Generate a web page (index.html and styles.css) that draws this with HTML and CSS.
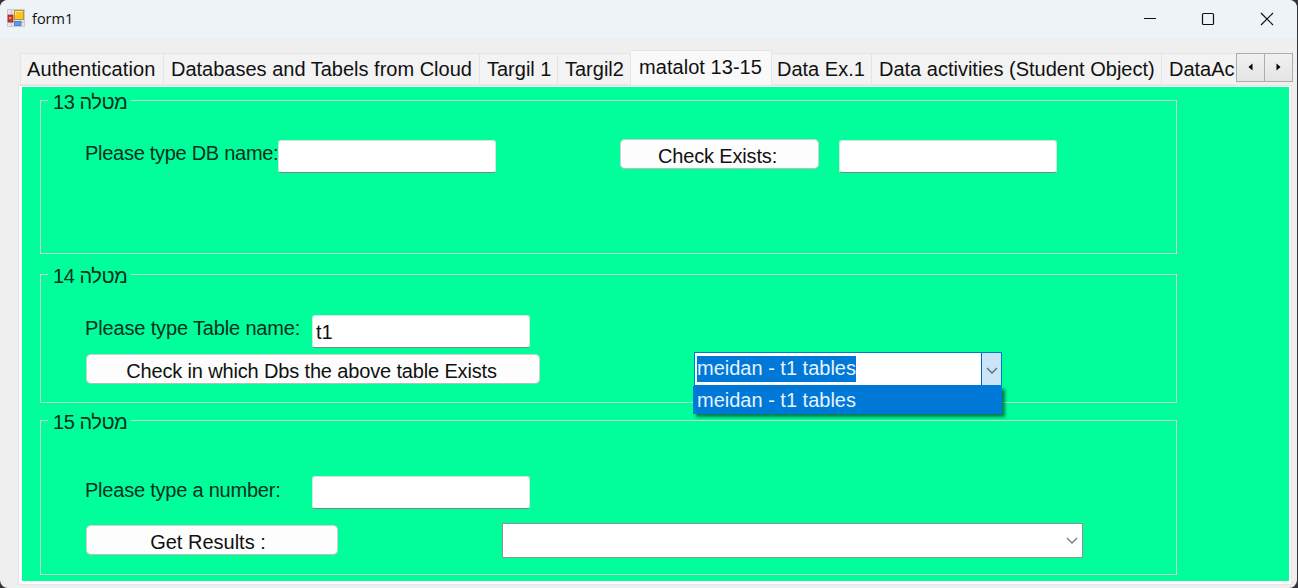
FILE: index.html
```html
<!DOCTYPE html>
<html lang="en">
<head>
<meta charset="utf-8">
<title>form1</title>
<link rel="stylesheet" href="styles.css">
</head>
<body>
<div class="window">
  <header class="titlebar">
    <svg class="app-icon" width="18" height="18" viewBox="0 0 18 18">
      <rect x="0.5" y="0.5" width="17" height="17" fill="#e4e6e8" stroke="#c9cccf"/>
      <path d="M4.5 1v16M1 13.5h16M12 13v4" stroke="#c4c7ca" fill="none"/>
      <rect x="1" y="6" width="5" height="7" fill="#c93a2b" stroke="#97261d" stroke-width=".7"/>
      <rect x="2.2" y="8" width="2" height="2" fill="#ef9a8c"/>
      <rect x="7.4" y="1.4" width="9" height="9.2" fill="#f7c32e" stroke="#bf8a13" stroke-width=".9"/>
      <path d="M8.5 6V2.500h7" stroke="#ffe78a" fill="none"/>
      <rect x="7.5" y="12.4" width="6.500" height="4.200" fill="#5a9cf0" stroke="#3c73c9" stroke-width=".8"/>
    </svg>
    <span class="title">form1</span>
    <svg class="controls" width="160" height="38" viewBox="0 0 160 38" fill="none" stroke="#111">
      <path d="M24 18.500h12" />
      <rect x="82.500" y="13.500" width="11" height="11" rx="1" stroke-width="1.200"/>
      <path d="M141 13l12 12M153 13l-12 12" stroke-width="1.200"/>
    </svg>
  </header>
  <nav class="tabs">
    <div class="tab-strip">
      <span class="tab t-auth">Authentication</span>
      <span class="tab t-db">Databases and Tabels from Cloud</span>
      <span class="tab t-one">Targil 1</span>
      <span class="tab t-two">Targil2</span>
      <span class="tab t-mat active">matalot 13-15</span>
      <span class="tab t-ex">Data Ex.1</span>
      <span class="tab t-act">Data activities (Student Object)</span>
      <span class="tab t-last">DataAc</span>
    </div>
    <div class="scroller">
      <span class="arrow"><svg width="5" height="8" viewBox="0 0 5 8"><path d="M4.500 0.500v7L0.500 4z"/></svg></span>
      <span class="arrow"><svg width="5" height="8" viewBox="0 0 5 8"><path d="M0.500 0.500v7L4.500 4z"/></svg></span>
    </div>
  </nav>
  <main class="page">
    <section class="group g13">
      <h2 class="legend">מטלה 13</h2>
      <div class="row">
        <label class="label l-db">Please type DB name:</label>
        <span class="box"></span>
        <span class="button b-check">Check Exists:</span>
        <span class="box"></span>
      </div>
    </section>
    <section class="group g14">
      <h2 class="legend">מטלה 14</h2>
      <div class="row">
        <label class="label l-table">Please type Table name:</label>
        <span class="box">t1</span>
      </div>
      <div class="row actions">
        <span class="button b-which">Check in which Dbs the above table Exists</span>
        <div class="combo open">
          <span class="value"><span class="selected">meidan - t1 tables</span></span>
          <span class="drop"><svg width="12" height="7" viewBox="0 0 12 7"><path d="M1 1l5 5 5-5" fill="none" stroke="#5c6670" stroke-width="1.300"/></svg></span>
          <div class="menu">meidan - t1 tables</div>
        </div>
      </div>
    </section>
    <section class="group g15">
      <h2 class="legend">מטלה 15</h2>
      <div class="row">
        <label class="label l-num">Please type a number:</label>
        <span class="box"></span>
      </div>
      <div class="row actions">
        <span class="button b-get">Get Results :</span>
        <div class="combo wide">
          <span class="value"></span>
          <span class="drop"><svg width="12" height="7" viewBox="0 0 12 7"><path d="M1 1l5 5 5-5" fill="none" stroke="#777" stroke-width="1.300"/></svg></span>
        </div>
      </div>
    </section>
  </main>
</div>
</body>
</html>
```
FILE: styles.css
```css
* { box-sizing: border-box; }
body {
  margin: 0;
  height: 588px;
  overflow: hidden;
  background: #34343a;
  font: 20px/24px "Liberation Sans", Arial, sans-serif;
  color: #111;
}
.window {
  width: 1297px;
  height: 588px;
  border-radius: 8px;
  overflow: hidden;
  background: #efefef;
  display: flex;
  flex-direction: column;
}
.titlebar {
  height: 38px;
  flex: none;
  display: flex;
  align-items: center;
  padding-left: 7px;
  background: #eef3f8;
}
.app-icon { margin-top: -2px; }
.title { margin-left: 7px; font: 14.500px/20px "Open Sans", "Noto Sans", sans-serif; color: #111; }
.controls { margin-left: auto; margin-right: 17px; }

.tabs { height: 47px; flex: none; display: flex; align-items: flex-end; padding-left: 20px; }
.tab-strip { width: 1216px; display: flex; align-items: flex-end; overflow: hidden; }
.tab {
  flex: none;
  height: 32px;
  padding: 3px 0 0 7px;
  background: #f3f3f3;
  border: 1px solid #e5e5e5;
  border-left-width: 0;
  white-space: nowrap;
}
.tab:first-child { border-left-width: 1px; padding-left: 6px; }
.tab.active { height: 35px; background: #f9f9f9; border-bottom: 0; padding: 4px 0 0 8px; }
.t-auth { width: 144px; letter-spacing: .13px; }
.t-db { width: 316px; }
.t-one { width: 78px; }
.t-two { width: 73px; }
.t-mat { width: 141px; letter-spacing: .05px; }
.t-ex { width: 100px; padding-left: 5px; }
.t-act { width: 290px; }
.t-last { width: 90px; }
.scroller { display: flex; align-self: flex-start; margin-top: 15px; }
.arrow {
  width: 29px;
  height: 29px;
  display: flex;
  align-items: center;
  justify-content: center;
  padding-bottom: 2px;
  background: linear-gradient(#f1f1f1, #e4e4e4);
  border: 1px solid #adadad;
}
.arrow + .arrow { margin-left: -1px; }

.page {
  margin: 0 5px 3px 18px;
  height: 500px;
  padding: 13px 0 0 18px;
  border: solid #fff;
  border-width: 2px 3px 4px 4px;
  background: #00fe9b;
  outline: 1px solid #e6e6e6;
  outline-offset: -1px;
}
.group { width: 1137px; border: 1px solid #c3dccf; padding-left: 44px; }
.g13 { height: 154px; }
.g14 { height: 129px; margin-top: 20px; }
.g15 { height: 155px; margin-top: 17px; }
.legend {
  width: 83px;
  height: 24px;
  margin: -11px 0 0 -37px;
  padding-left: 5px;
  background: #00fe9b;
  font: 20px/24px "Liberation Sans", "DejaVu Sans", sans-serif;
  letter-spacing: -.45px;
  white-space: nowrap;
  color: #06301f;
}
.row { display: flex; align-items: flex-start; }
.label { line-height: 24px; letter-spacing: -.15px; white-space: nowrap; color: #06301f; }
.box {
  width: 218px;
  height: 33px;
  padding: 4px 3px;
  background: #fff;
  border: 1px solid #d6e6de;
  border-bottom-color: #7f8581;
  border-radius: 3px;
}
.button {
  height: 30px;
  padding-top: 4px;
  background: #fdfdfd;
  border: 1px solid #d0d0d0;
  border-bottom-color: #bbb;
  border-radius: 5px;
  text-align: center;
  letter-spacing: -.15px;
  white-space: nowrap;
}
.g13 .row { margin-top: 26px; }
.l-db { width: 193px; margin-top: 1px; letter-spacing: -.28px; }
.b-check { width: 199px; margin: -1px 20px 0 124px; padding-right: 4px; }
.g14 .row, .g15 .row { margin-top: 27px; }
.l-table, .l-num { width: 227px; margin-top: 1px; }
.l-num { margin-top: 2px; letter-spacing: -.22px; }
.g15 .row { margin-top: 42px; }
.group .actions { margin-top: 6px; }
.b-which { width: 454px; margin-left: 1px; padding-right: 3px; }
.b-get { width: 252px; margin: 10px 0 0 1px; padding-right: 8px; letter-spacing: 0; }
.combo { position: relative; display: flex; width: 308px; height: 34px; margin: -2px 0 0 154px; background: #fff; border: 1px solid #0078d7; }
.value { flex: 1; padding: 3px 0 0 2px; }
.selected { display: inline-block; height: 26px; line-height: 25px; background: #0078d7; color: #e6f3ff; white-space: nowrap; }
.drop { width: 21px; display: flex; align-items: center; justify-content: center; }
.open .drop { width: 20px; padding-top: 3px; background: #cce4f7; border-left: 1px solid #0067c0; }
.menu {
  position: absolute;
  left: -2px;
  right: -1px;
  top: 33px;
  height: 28px;
  padding-left: 4px;
  line-height: 29px;
  background: #0078d7;
  color: #e6f3ff;
  box-shadow: 3px 3px 3px rgba(0, 0, 0, .5);
}
.wide { width: 581px; height: 35px; margin: 8px 0 0 164px; border-color: #8a9490; }
```
